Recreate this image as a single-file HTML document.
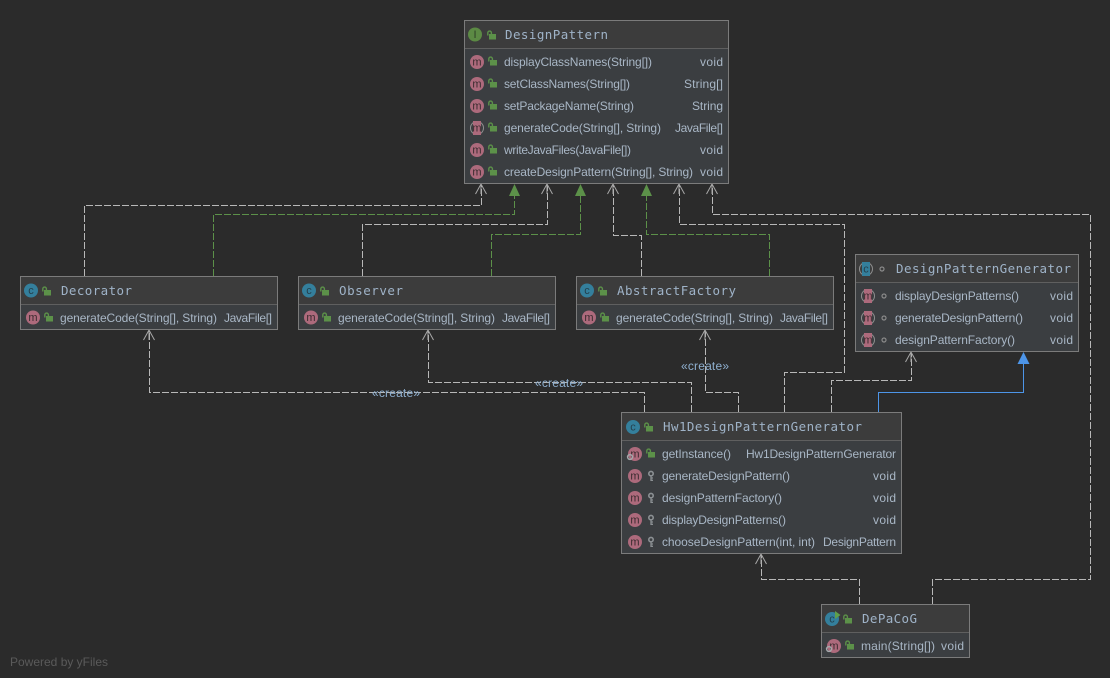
<!DOCTYPE html>
<html><head><meta charset="utf-8"><title>DesignPattern diagram</title>
<style>
html,body{margin:0;padding:0;background:#2b2b2b;width:1110px;height:678px;overflow:hidden}
svg{display:block}
.t{font-family:"DejaVu Sans Mono","Liberation Mono",monospace;font-size:12.5px;fill:#9fb3c8}
.r{font-family:"Liberation Sans",sans-serif;font-size:12px;fill:#a9b7c6}
.m{font-family:"Liberation Sans",sans-serif;font-size:11px;fill:#3a2b2f;text-anchor:middle}
.c{font-family:"Liberation Sans",sans-serif;font-size:11px;fill:#24404d;text-anchor:middle}
.l{font-family:"Liberation Sans",sans-serif;font-size:12px;fill:#8fb0d0}
.box{fill:#3b3e41;stroke:#7b7b7b;stroke-width:1}
.hd{fill:#3c3c3c}
.sep{stroke:#5f5f5f;stroke-width:1}
.e{fill:none;stroke:#b8b8b8;stroke-width:1;stroke-dasharray:7 2 }
.g{fill:none;stroke:#5c9149;stroke-width:1;stroke-dasharray:7 2}
.a{fill:none;stroke:#a8a8a8;stroke-width:1}
</style></head><body>
<svg width="1110" height="678" viewBox="0 0 1110 678" xmlns="http://www.w3.org/2000/svg">
<defs>
<g id="lock"><rect x="2" y="3" width="7" height="5.5" fill="#5c9149"/><path d="M.8 4.5V1.9a1.8 1.8 0 0 1 3.6 0V3.5" fill="none" stroke="#5c9149" stroke-width="1.4"/></g>
<g id="key"><circle cx="3" cy="2.6" r="2.2" fill="none" stroke="#8b9093" stroke-width="1.6"/><path d="M3 4.5V10M3 7H5M3 9.3H5" fill="none" stroke="#8b9093" stroke-width="1.3"/></g>
<g id="up"><path d="M-5.5 10L0 0L5.5 10M0 0V10" class="a"/></g>
<circle id="dot" r="2" fill="none" stroke="#8a8a8a" stroke-width="1.2"/>
<g id="gear"><circle r="2.4" fill="none" stroke="#a5a9ac" stroke-width="1.5"/></g>
</defs>

<!-- edges -->
<path class="e" d="M84.5 276V205.5H481.5V186"/>
<path class="g" d="M213.5 276V214.5H514.5V195"/>
<path class="e" d="M362.5 276V224.5H547.5V186"/>
<path class="g" d="M491.5 276V234.5H580.5V195"/>
<path class="e" d="M641.5 276V235.5H613.5V186"/>
<path class="g" d="M769.5 276V234.5H646.5V195"/>
<path class="e" d="M784.5 412V372.5H844.5V224.5H679.5V186"/>
<path class="e" d="M831.5 412V380.5H911.5V354"/>
<path class="e" d="M932.5 604V579.5H1090.5V214.5H712.5V186"/>
<path class="e" d="M859.5 604V579.5H761.5V556"/>
<path class="e" d="M644.5 412V392.5H149.5V332"/>
<path class="e" d="M691.5 412V382.5H428.5V332"/>
<path class="e" d="M738.5 412V392.5H705.5V332"/>
<path d="M878.5 412V392.5H1023.5V362" fill="none" stroke="#4d95e8" stroke-width="1"/>

<use href="#up" x="481" y="184"/><use href="#up" x="547" y="184"/><use href="#up" x="613" y="184"/><use href="#up" x="679" y="184"/><use href="#up" x="712" y="184"/>
<use href="#up" x="149" y="330"/><use href="#up" x="428" y="330"/><use href="#up" x="705" y="330"/><use href="#up" x="911" y="352"/><use href="#up" x="761" y="554"/>
<path d="M514.5 184L520 196H509Z M580.5 184L586 196H575Z M646.5 184L652 196H641Z" fill="#5c9149"/>
<path d="M1023.5 352L1029.5 364H1017.5Z" fill="#4d95e8"/>

<text class="l" x="372" y="397" textLength="48">«create»</text>
<text class="l" x="535" y="387" textLength="48">«create»</text>
<text class="l" x="681" y="370" textLength="48">«create»</text>

<!-- DesignPattern -->
<rect class="box" x="464.5" y="20.5" width="264" height="163"/>
<rect class="hd" x="465" y="21" width="263" height="27"/>
<line class="sep" x1="465" x2="728" y1="48.5" y2="48.5"/>
<circle cx="475" cy="34.5" r="7" fill="#5c8a44"/><text class="m" x="475" y="38" style="fill:#2f4127">I</text>
<use href="#lock" x="487" y="31"/>
<text class="t" x="505" y="39" textLength="103">DesignPattern</text>
<circle cx="477" cy="62" r="7" fill="#ad6a7c"/><text class="m" x="477" y="65.5">m</text><use href="#lock" x="488" y="57"/>
<text class="r" x="504" y="66" textLength="148">displayClassNames(String[])</text><text class="r" x="700" y="66" textLength="23">void</text>
<circle cx="477" cy="84" r="7" fill="#ad6a7c"/><text class="m" x="477" y="87.5">m</text><use href="#lock" x="488" y="79"/>
<text class="r" x="504" y="88" textLength="126">setClassNames(String[])</text><text class="r" x="684" y="88" textLength="39">String[]</text>
<circle cx="477" cy="106" r="7" fill="#ad6a7c"/><text class="m" x="477" y="109.5">m</text><use href="#lock" x="488" y="101"/>
<text class="r" x="504" y="110" textLength="130">setPackageName(String)</text><text class="r" x="692" y="110" textLength="31">String</text>
<circle cx="477" cy="128" r="7" fill="#8f8f8f"/><circle cx="477" cy="128" r="6" fill="#3b3e41"/><rect x="473" y="121" width="8" height="14" fill="#ad6a7c"/><text class="m" x="477" y="131.5">m</text><use href="#lock" x="488" y="123"/>
<text class="r" x="504" y="132" textLength="157">generateCode(String[], String)</text><text class="r" x="675" y="132" textLength="48">JavaFile[]</text>
<circle cx="477" cy="150" r="7" fill="#ad6a7c"/><text class="m" x="477" y="153.5">m</text><use href="#lock" x="488" y="145"/>
<text class="r" x="504" y="154" textLength="127">writeJavaFiles(JavaFile[])</text><text class="r" x="700" y="154" textLength="23">void</text>
<circle cx="477" cy="172" r="7" fill="#ad6a7c"/><text class="m" x="477" y="175.5">m</text><use href="#lock" x="488" y="167"/>
<text class="r" x="504" y="176" textLength="189">createDesignPattern(String[], String)</text><text class="r" x="700" y="176" textLength="23">void</text>

<!-- Decorator -->
<rect class="box" x="20.5" y="276.5" width="257" height="53"/>
<rect class="hd" x="21" y="277" width="256" height="27"/>
<line class="sep" x1="21" x2="277" y1="304.5" y2="304.5"/>
<circle cx="31" cy="290.5" r="7" fill="#347f9c"/><text class="c" x="31" y="294">c</text><use href="#lock" x="42" y="287"/>
<text class="t" x="61" y="295" textLength="71">Decorator</text>
<circle cx="33" cy="317.5" r="7" fill="#ad6a7c"/><text class="m" x="33" y="321">m</text><use href="#lock" x="44" y="313"/>
<text class="r" x="60" y="322" textLength="157">generateCode(String[], String)</text><text class="r" x="224" y="322" textLength="48">JavaFile[]</text>

<!-- Observer -->
<rect class="box" x="298.5" y="276.5" width="257" height="53"/>
<rect class="hd" x="299" y="277" width="256" height="27"/>
<line class="sep" x1="299" x2="555" y1="304.5" y2="304.5"/>
<circle cx="309" cy="290.5" r="7" fill="#347f9c"/><text class="c" x="309" y="294">c</text><use href="#lock" x="320" y="287"/>
<text class="t" x="339" y="295" textLength="64">Observer</text>
<circle cx="311" cy="317.5" r="7" fill="#ad6a7c"/><text class="m" x="311" y="321">m</text><use href="#lock" x="322" y="313"/>
<text class="r" x="338" y="322" textLength="157">generateCode(String[], String)</text><text class="r" x="502" y="322" textLength="48">JavaFile[]</text>

<!-- AbstractFactory -->
<rect class="box" x="576.5" y="276.5" width="257" height="53"/>
<rect class="hd" x="577" y="277" width="256" height="27"/>
<line class="sep" x1="577" x2="833" y1="304.5" y2="304.5"/>
<circle cx="587" cy="290.5" r="7" fill="#347f9c"/><text class="c" x="587" y="294">c</text><use href="#lock" x="598" y="287"/>
<text class="t" x="617" y="295" textLength="119">AbstractFactory</text>
<circle cx="589" cy="317.5" r="7" fill="#ad6a7c"/><text class="m" x="589" y="321">m</text><use href="#lock" x="600" y="313"/>
<text class="r" x="616" y="322" textLength="157">generateCode(String[], String)</text><text class="r" x="780" y="322" textLength="48">JavaFile[]</text>

<!-- DesignPatternGenerator -->
<rect class="box" x="855.5" y="254.5" width="223" height="97"/>
<rect class="hd" x="856" y="255" width="222" height="27"/>
<line class="sep" x1="856" x2="1078" y1="282.5" y2="282.5"/>
<circle cx="866" cy="269" r="7" fill="#8f8f8f"/><circle cx="866" cy="269" r="6" fill="#3c3c3c"/><rect x="862" y="262" width="8" height="14" fill="#347f9c"/><text class="c" x="866" y="272.5">c</text><use href="#dot" x="882" y="269"/>
<text class="t" x="896" y="273" textLength="175">DesignPatternGenerator</text>
<circle cx="868" cy="296" r="7" fill="#8f8f8f"/><circle cx="868" cy="296" r="6" fill="#3b3e41"/><rect x="864" y="289" width="8" height="14" fill="#ad6a7c"/><text class="m" x="868" y="299.5">m</text><use href="#dot" x="884" y="296"/>
<text class="r" x="895" y="300" textLength="124">displayDesignPatterns()</text><text class="r" x="1050" y="300" textLength="23">void</text>
<circle cx="868" cy="318" r="7" fill="#8f8f8f"/><circle cx="868" cy="318" r="6" fill="#3b3e41"/><rect x="864" y="311" width="8" height="14" fill="#ad6a7c"/><text class="m" x="868" y="321.5">m</text><use href="#dot" x="884" y="318"/>
<text class="r" x="895" y="322" textLength="128">generateDesignPattern()</text><text class="r" x="1050" y="322" textLength="23">void</text>
<circle cx="868" cy="340" r="7" fill="#8f8f8f"/><circle cx="868" cy="340" r="6" fill="#3b3e41"/><rect x="864" y="333" width="8" height="14" fill="#ad6a7c"/><text class="m" x="868" y="343.5">m</text><use href="#dot" x="884" y="340"/>
<text class="r" x="895" y="344" textLength="120">designPatternFactory()</text><text class="r" x="1050" y="344" textLength="23">void</text>

<!-- Hw1DesignPatternGenerator -->
<rect class="box" x="621.5" y="412.5" width="280" height="141"/>
<rect class="hd" x="622" y="413" width="279" height="27"/>
<line class="sep" x1="622" x2="901" y1="440.5" y2="440.5"/>
<circle cx="633" cy="427" r="7" fill="#347f9c"/><text class="c" x="633" y="430.5">c</text><use href="#lock" x="644" y="423"/>
<text class="t" x="663" y="431" textLength="199">Hw1DesignPatternGenerator</text>
<circle cx="635" cy="454" r="7" fill="#ad6a7c"/><text class="m" x="635" y="457.5">m</text><use href="#gear" x="630" y="457"/><use href="#lock" x="646" y="449"/>
<text class="r" x="662" y="458" textLength="69">getInstance()</text><text class="r" x="746" y="458" textLength="150">Hw1DesignPatternGenerator</text>
<circle cx="635" cy="476" r="7" fill="#ad6a7c"/><text class="m" x="635" y="479.5">m</text><use href="#key" x="648" y="471"/>
<text class="r" x="662" y="480" textLength="128">generateDesignPattern()</text><text class="r" x="873" y="480" textLength="23">void</text>
<circle cx="635" cy="498" r="7" fill="#ad6a7c"/><text class="m" x="635" y="501.5">m</text><use href="#key" x="648" y="493"/>
<text class="r" x="662" y="502" textLength="120">designPatternFactory()</text><text class="r" x="873" y="502" textLength="23">void</text>
<circle cx="635" cy="520" r="7" fill="#ad6a7c"/><text class="m" x="635" y="523.5">m</text><use href="#key" x="648" y="515"/>
<text class="r" x="662" y="524" textLength="124">displayDesignPatterns()</text><text class="r" x="873" y="524" textLength="23">void</text>
<circle cx="635" cy="542" r="7" fill="#ad6a7c"/><text class="m" x="635" y="545.5">m</text><use href="#key" x="648" y="537"/>
<text class="r" x="662" y="546" textLength="153">chooseDesignPattern(int, int)</text><text class="r" x="823" y="546" textLength="73">DesignPattern</text>

<!-- DePaCoG -->
<rect class="box" x="821.5" y="604.5" width="148" height="53"/>
<rect class="hd" x="822" y="605" width="147" height="27"/>
<line class="sep" x1="822" x2="969" y1="632.5" y2="632.5"/>
<circle cx="832" cy="619" r="7" fill="#347f9c"/><text class="c" x="832" y="622.5">c</text><path d="M835 611L840.5 615L835 619Z" fill="#5fa04a"/><use href="#lock" x="843" y="615"/>
<text class="t" x="862" y="623" textLength="55">DePaCoG</text>
<circle cx="834" cy="646" r="7" fill="#ad6a7c"/><text class="m" x="834" y="649.5">m</text><use href="#gear" x="829" y="649"/><use href="#lock" x="845" y="641"/>
<text class="r" x="861" y="650" textLength="74">main(String[])</text><text class="r" x="941" y="650" textLength="23">void</text>

<text x="10" y="666" textLength="98" style="font-family:'Liberation Sans',sans-serif;font-size:12px;fill:#5a5a5a">Powered by yFiles</text>
</svg>
</body></html>
